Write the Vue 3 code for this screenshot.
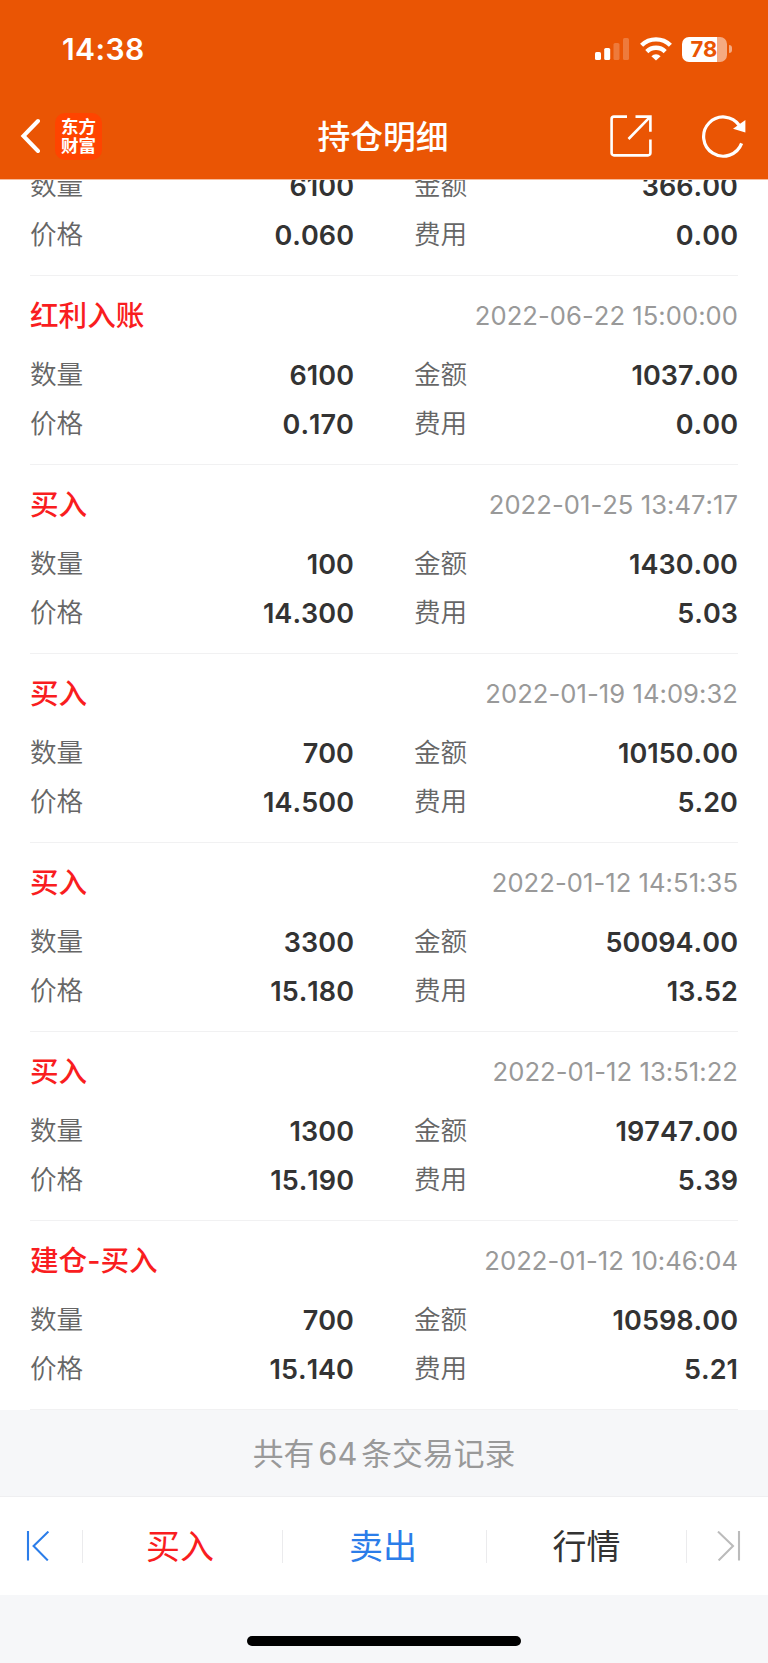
<template>
    <div class="page">
        <header class="header">
            <div class="status-bar">
                <span class="time">14:38</span>
                <div class="status-icons">
                    <svg class="signal" width="34" height="24" viewBox="0 0 34 24" fill="#fff">
                        <rect x="0" y="15" width="6" height="8" rx="1.6" />
                        <rect x="9.2" y="11" width="6" height="12" rx="1.6" />
                        <rect x="18.5" y="6" width="6" height="17" rx="1.6" opacity="0.22" />
                        <rect x="28" y="1" width="6" height="22" rx="1.6" opacity="0.22" />
                    </svg>
                    <svg class="wifi" width="32" height="24" viewBox="0 0 32 24" fill="none" stroke="#fff"
                        stroke-width="4.4">
                        <path d="M1.6 8.2a20.6 20.6 0 0 1 28.8 0" />
                        <path d="M6.8 14.6a13 13 0 0 1 18.4 0" />
                        <path d="M16 23.6l-4.6-4.4a6.6 6.6 0 0 1 9.2 0z" fill="#fff" stroke="none" />
                    </svg>
                    <div class="battery">
                        <span class="battery-body">78</span>
                        <span class="battery-cap"></span>
                    </div>
                </div>
            </div>
            <div class="nav-bar">
                <div class="nav-left">
                    <svg width="20" height="36" viewBox="0 0 20 36" fill="none" stroke="#fff" stroke-width="4">
                        <path d="M18 3L3.4 18 18 33" stroke-linecap="round" stroke-linejoin="miter" />
                    </svg>
                    <div class="logo"><span>东方</span><span>财富</span></div>
                </div>
                <h1 class="nav-title">持仓明细</h1>
                <div class="nav-right">
                    <svg width="42" height="42" viewBox="0 0 42 42" fill="none" stroke="#fff" stroke-width="2.6">
                        <path d="M17 1.6H4a2.4 2.4 0 0 0-2.4 2.4v34a2.4 2.4 0 0 0 2.4 2.4h34a2.4 2.4 0 0 0 2.4-2.4V24.5" />
                        <path d="M25.5 1.6h14.9v15.2M39.6 2.4L18.5 24" />
                    </svg>
                    <svg width="44" height="44" viewBox="0 0 44 44" fill="none" stroke="#fff" stroke-width="3.2">
                        <path d="M39.6 29.4A19.6 19.6 0 1 1 37.4 11.5" />
                        <path d="M43.4 6v12.4L31 14.8z" fill="#fff" stroke="none" />
                    </svg>
                </div>
            </div>
        </header>

        <main class="list">
            <div v-for="(record, index) in records" :key="index" class="record">
                <div v-if="record.type" class="record-head">
                    <span class="record-type">{{ record.type }}</span>
                    <span class="record-time">{{ record.time }}</span>
                </div>
                <div class="record-body">
                    <div v-for="field in fields" :key="field.key" class="cell">
                        <span class="label">{{ field.label }}</span>
                        <span class="value">{{ record[field.key] }}</span>
                    </div>
                </div>
            </div>
        </main>

        <div class="summary">共有<span class="count">64</span>条交易记录</div>

        <nav class="tab-bar">
            <button class="tab tab-prev">
                <svg width="24" height="30" viewBox="0 0 24 30" fill="none" stroke="currentColor" stroke-width="2.1">
                    <path d="M2 0v29.5M22.4 .6L7.6 15l14.2 14.4" />
                </svg>
            </button>
            <button v-for="tab in tabs" :key="tab.label" :class="['tab', tab.cls]">{{ tab.label }}</button>
            <button class="tab tab-next">
                <svg width="24" height="30" viewBox="0 0 24 30" fill="none" stroke="currentColor" stroke-width="2.1">
                    <path d="M22 0v29.5M1 .6L16 15 1.6 29.4" />
                </svg>
            </button>
        </nav>

        <div class="home-area">
            <div class="home-indicator"></div>
        </div>
    </div>
</template>

<script setup>
import { ref } from 'vue';

const fields = [
    { key: 'quantity', label: '数量' },
    { key: 'amount', label: '金额' },
    { key: 'price', label: '价格' },
    { key: 'fee', label: '费用' },
];

const tabs = [
    { label: '买入', cls: 'tab-buy' },
    { label: '卖出', cls: 'tab-sell' },
    { label: '行情', cls: 'tab-quote' },
];

const records = ref([
    { quantity: '6100', amount: '366.00', price: '0.060', fee: '0.00' },
    { type: '红利入账', time: '2022-06-22 15:00:00', quantity: '6100', amount: '1037.00', price: '0.170', fee: '0.00' },
    { type: '买入', time: '2022-01-25 13:47:17', quantity: '100', amount: '1430.00', price: '14.300', fee: '5.03' },
    { type: '买入', time: '2022-01-19 14:09:32', quantity: '700', amount: '10150.00', price: '14.500', fee: '5.20' },
    { type: '买入', time: '2022-01-12 14:51:35', quantity: '3300', amount: '50094.00', price: '15.180', fee: '13.52' },
    { type: '买入', time: '2022-01-12 13:51:22', quantity: '1300', amount: '19747.00', price: '15.190', fee: '5.39' },
    { type: '建仓-买入', time: '2022-01-12 10:46:04', quantity: '700', amount: '10598.00', price: '15.140', fee: '5.21' },
]);
</script>

<style>
body {
    margin: 0;
    background: #f6f7f9;
}
</style>

<style scoped>
.page {
    display: flex;
    flex-direction: column;
    width: 768px;
    height: 1663px;
    overflow: hidden;
    background: #f6f7f9;
    font-family: Inter, "Noto Sans CJK SC", sans-serif;
}

/* 頂部 */
.header {
    flex: none;
    height: 180px;
    background: #ea5504;
    border-bottom: 1px solid #f7bb9b;
    box-sizing: border-box;
    color: #fff;
}

.status-bar {
    display: flex;
    justify-content: space-between;
    align-items: center;
    height: 98px;
    padding: 0 36px 0 62px;
}

.time {
    font-size: 30px;
    font-weight: 600;
    letter-spacing: 0.4px;
}

.status-icons {
    display: flex;
    align-items: center;
}

.signal {
    margin-right: 11px;
}

.wifi {
    margin-right: 10px;
}

.battery {
    display: flex;
    align-items: center;
    gap: 2px;
}

.battery-body {
    width: 45px;
    height: 25px;
    padding-right: 1px;
    box-sizing: border-box;
    border-radius: 7px;
    background: linear-gradient(90deg, #fff 78%, #f5aa82 78%);
    color: #ea5504;
    font-size: 22px;
    font-weight: 700;
    line-height: 25px;
    text-align: center;
}

.battery-cap {
    width: 3px;
    height: 8px;
    border-radius: 0 4px 4px 0;
    background: #f5aa82;
}

.nav-bar {
    display: grid;
    grid-template-columns: 1fr auto 1fr;
    align-items: center;
    height: 76px;
    padding: 0 22px 0 20px;
}

.nav-left {
    display: flex;
    align-items: center;
    gap: 15px;
}

.logo {
    display: flex;
    flex-direction: column;
    align-items: center;
    justify-content: center;
    width: 47px;
    height: 47px;
    padding-bottom: 2px;
    box-sizing: border-box;
    border-radius: 10px;
    background: #ff4400;
    font-family: "Noto Sans CJK SC", sans-serif;
    font-size: 17.5px;
    font-weight: 700;
    line-height: 19.5px;
}

.nav-title {
    margin: 0;
    padding-bottom: 3px;
    font-size: 32.8px;
    font-weight: 500;
}

.nav-right {
    display: flex;
    align-items: center;
    justify-content: flex-end;
    gap: 50px;
}

/* 交易紀錄，貼齊底部，超出的部分被標題列裁掉 */
.list {
    flex: none;
    display: flex;
    flex-direction: column;
    justify-content: flex-end;
    height: 1230px;
    padding: 0 30px;
    box-sizing: border-box;
    overflow: hidden;
    background: #fff;
}

.record {
    flex: none;
    padding: 17px 0 16px;
    border-bottom: 1px solid #f1f1f2;
}

.record-head {
    display: flex;
    justify-content: space-between;
    align-items: center;
    height: 45px;
    margin-bottom: 12px;
}

.record-type {
    padding-bottom: 4px;
    color: #f91d20;
    font-size: 28.6px;
    font-weight: 500;
}

.record-time {
    color: #999;
    font-size: 25.6px;
    font-kerning: none;
    letter-spacing: 0.05px;
}

.record-body {
    display: grid;
    grid-template-columns: 1fr 1fr;
    column-gap: 60px;
}

.cell {
    display: flex;
    justify-content: space-between;
    align-items: center;
    height: 49px;
}

.label {
    padding-bottom: 4px;
    color: #666;
    font-size: 26.6px;
    font-weight: 350;
}

.value {
    padding-top: 1px;
    color: #333;
    font-size: 27px;
    font-weight: 600;
    font-kerning: none;
    letter-spacing: 0.05px;
}

.summary {
    flex: none;
    height: 86px;
    line-height: 87px;
    color: #999;
    font-size: 30.8px;
    text-align: center;
}

.count {
    margin: 0 4px;
}

/* 底部操作列 */
.tab-bar {
    flex: none;
    display: grid;
    grid-template-columns: 83px 200px 204px 200px 81px;
    align-items: center;
    height: 99px;
    border-top: 1px solid #efeff1;
    box-sizing: border-box;
    background: #fff;
}

.tab {
    display: flex;
    align-items: center;
    justify-content: center;
    height: 33px;
    padding: 0;
    border: none;
    border-right: 1px solid #ebebed;
    background: none;
    font-family: inherit;
    font-size: 34px;
    line-height: 33px;
    cursor: pointer;
}

.tab-prev {
    padding-right: 6px;
    color: #2b7de9;
}

.tab-buy {
    padding-right: 5px;
    color: #f91d20;
}

.tab-sell {
    padding-right: 3px;
    color: #2b7de9;
}

.tab-quote {
    color: #333;
}

.tab-next {
    padding-left: 3px;
    border-right: none;
    color: #bbb;
}

.home-area {
    flex: 1;
    display: flex;
    justify-content: center;
    align-items: flex-end;
    padding-bottom: 17px;
}

.home-indicator {
    width: 274px;
    height: 10px;
    border-radius: 5px;
    background: #000;
}
</style>
